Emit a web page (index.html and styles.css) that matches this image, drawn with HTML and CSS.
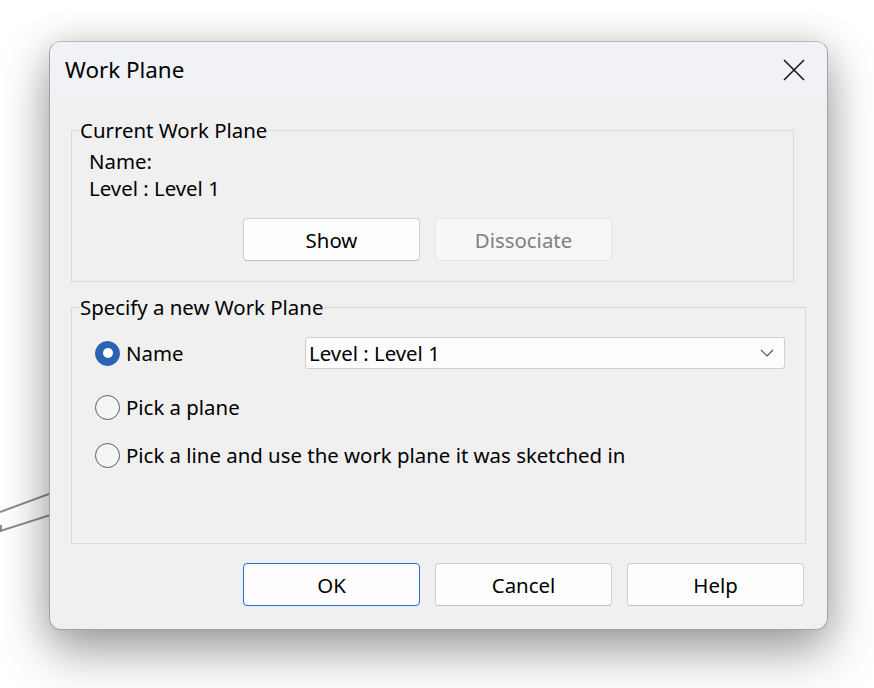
FILE: index.html
```html
<!DOCTYPE html>
<html>
<head>
<meta charset="utf-8">
<link rel="stylesheet" href="styles.css">
</head>
<body>
<div class="desktop">
  <svg class="backdrop-lines" width="60" height="60" viewBox="0 0 60 60">
    <path d="M0 30 L60 8" stroke="#8c8c8c" stroke-width="2" fill="none"/>
    <path d="M0 49 L60 30" stroke="#8c8c8c" stroke-width="2" fill="none"/>
    <path d="M1 43 L1 50" stroke="#8c8c8c" stroke-width="2" fill="none"/>
  </svg>
  <div class="dialog">
    <div class="titlebar">
      <span class="title">Work Plane</span>
      <svg class="close" width="22" height="22" viewBox="0 0 22 22">
        <path d="M1 1 L21 21 M21 1 L1 21" stroke="#1b1b1b" stroke-width="1.6" fill="none"/>
      </svg>
    </div>
    <div class="content">
      <fieldset class="group group-current">
        <legend>Current Work Plane</legend>
        <div class="group-body">
          <div class="line">Name:</div>
          <div class="line">Level : Level 1</div>
          <div class="btn-row">
            <button class="btn">Show</button>
            <button class="btn disabled">Dissociate</button>
          </div>
        </div>
      </fieldset>
      <fieldset class="group group-new">
        <legend>Specify a new Work Plane</legend>
        <div class="group-body options">
          <div class="opt opt-name">
            <div class="opt-label"><span class="radio checked"></span><span>Name</span></div>
            <div class="combo">
              <span>Level : Level 1</span>
              <svg class="chev" width="14" height="8" viewBox="0 0 14 8"><path d="M1 1 L7 7 L13 1" stroke="#555" stroke-width="1.2" fill="none"/></svg>
            </div>
          </div>
          <div class="opt opt-plane">
            <div class="opt-label"><span class="radio"></span><span>Pick a plane</span></div>
          </div>
          <div class="opt opt-line">
            <div class="opt-label"><span class="radio"></span><span>Pick a line and use the work plane it was sketched in</span></div>
          </div>
        </div>
      </fieldset>
      <div class="footer">
        <button class="btn primary">OK</button>
        <button class="btn">Cancel</button>
        <button class="btn">Help</button>
      </div>
    </div>
  </div>
</div>
</body>
</html>
```
FILE: styles.css
```css
html, body {
  margin: 0;
  padding: 0;
  background: #ffffff;
}
body {
  font-family: "Noto Sans", "Open Sans", sans-serif;
  color: #000;
}
.desktop {
  position: relative;
  width: 874px;
  height: 688px;
  overflow: hidden;
  padding: 41px 0 0 49px;
  box-sizing: border-box;
}
.backdrop-lines {
  position: absolute;
  left: 0;
  top: 482px;
  width: 60px;
  height: 60px;
}
.dialog {
  position: relative;
  width: 779px;
  height: 589px;
  box-sizing: border-box;
  border: 1px solid #a2a2a2;
  border-top-color: #bababa;
  border-radius: 12px;
  background: #f0f0f0;
  overflow: hidden;
  box-shadow: 0 22px 50px rgba(0, 0, 0, 0.36), 0 0 36px rgba(0, 0, 0, 0.12);
}
.titlebar {
  height: 56px;
  background: #f1f2f7;
  display: flex;
  align-items: center;
  justify-content: space-between;
  padding: 0 22px 0 15px;
}
.title {
  font-size: 22.4px;
  line-height: 28px;
}
.close {
  display: block;
}
.content {
  padding: 20px 0 0 21px;
}
.group {
  margin: 0;
  padding: 0;
  border: 1px solid #d9d9d9;
  box-sizing: border-box;
  min-width: 0;
}
.group legend {
  font-size: 20.4px;
  line-height: 24px;
  padding: 0 1px;
  margin-left: 7px;
}
.group-current {
  width: 723px;
  height: 164px;
}
.group-new {
  margin-top: 13px;
  width: 735px;
  height: 249px;
}
.group-body {
  font-size: 20.4px;
}
.group-current .group-body {
  padding: 6px 0 0 17px;
}
.line {
  line-height: 27px;
}
.btn-row {
  display: flex;
  gap: 15px;
  margin-top: 16px;
  padding-left: 154px;
}
.btn {
  width: 177px;
  height: 43px;
  box-sizing: border-box;
  border: 1px solid #d0d0d0;
  border-bottom-color: #bdbdbd;
  border-radius: 4px;
  background: #fdfdfd;
  font-family: "Noto Sans", "Open Sans", sans-serif;
  font-size: 20.4px;
  color: #000;
  padding: 2px 0 0 0;
  line-height: 39px;
}
.btn.disabled {
  background: #f7f7f7;
  border-color: #e4e4e4;
  color: #808080;
}
.btn.primary {
  border: 1px solid #1f6fdc;
}
.options {
  padding: 18px 0 0 23px;
}
.opt {
  display: flex;
  align-items: center;
}
.opt-name {
  height: 32px;
}
.opt-plane {
  height: 26px;
  margin-top: 25px;
}
.opt-line {
  height: 26px;
  margin-top: 22px;
}
.opt-label {
  display: flex;
  align-items: center;
  gap: 6px;
  width: 210px;
  white-space: nowrap;
  line-height: 26px;
}
.radio {
  width: 25px;
  height: 25px;
  box-sizing: border-box;
  border: 1.5px solid #5e5e5e;
  border-radius: 50%;
  background: #f5f5f5;
  flex: none;
  display: flex;
  align-items: center;
  justify-content: center;
}
.radio.checked {
  background: #2a62b6;
  border-color: #2a62b6;
}
.radio.checked::after {
  content: "";
  width: 10px;
  height: 10px;
  border-radius: 50%;
  background: #ffffff;
}
.combo {
  width: 480px;
  height: 32px;
  box-sizing: border-box;
  border: 1px solid #cfcfcf;
  border-radius: 3px;
  background: #fdfdfd;
  display: flex;
  align-items: center;
  justify-content: space-between;
  padding: 0 10px 0 3px;
  line-height: 26px;
}
.chev {
  display: block;
}
.footer {
  display: flex;
  gap: 15px;
  margin-top: 19px;
  padding-left: 172px;
}
```
